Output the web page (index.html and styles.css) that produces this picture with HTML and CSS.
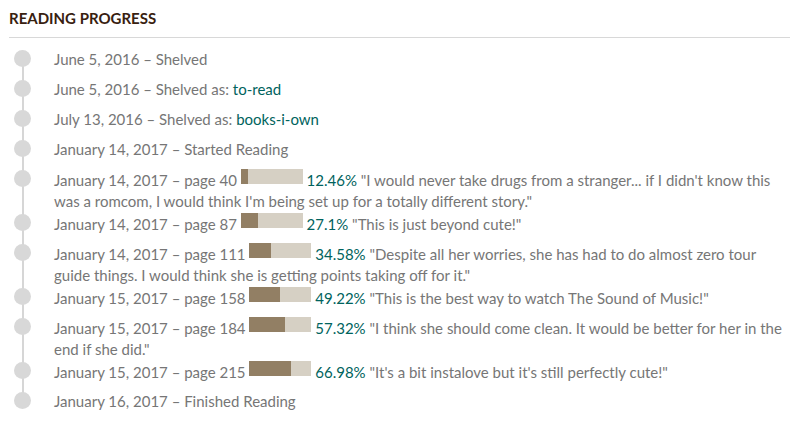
FILE: index.html
```html
<!DOCTYPE html>
<html>
<head>
<meta charset="utf-8">
<link rel="stylesheet" href="styles.css">
</head>
<body>
<section class="progress">
  <h2 class="title">READING PROGRESS</h2>
  <ul class="timeline">
    <li class="item"><span class="dot"></span><div class="text">June 5, 2016 – Shelved</div></li>
    <li class="item"><span class="dot"></span><div class="text">June 5, 2016 – Shelved as: <a class="link" href="#">to-read</a></div></li>
    <li class="item"><span class="dot"></span><div class="text">July 13, 2016 – Shelved as: <a class="link" href="#">books-i-own</a></div></li>
    <li class="item"><span class="dot"></span><div class="text">January 14, 2017 – Started Reading</div></li>
    <li class="item"><span class="dot"></span><div class="text">January 14, 2017 – page 40 <span class="bar"><span class="fill" style="width:12.46%"></span></span> <span class="pct">12.46%</span> "I would never take drugs from a stranger... if I didn't know this was a romcom, I would think I'm being set up for a totally different story."</div></li>
    <li class="item"><span class="dot"></span><div class="text">January 14, 2017 – page 87 <span class="bar"><span class="fill" style="width:27.1%"></span></span> <span class="pct">27.1%</span> "This is just beyond cute!"</div></li>
    <li class="item"><span class="dot"></span><div class="text">January 14, 2017 – page 111 <span class="bar"><span class="fill" style="width:34.58%"></span></span> <span class="pct">34.58%</span> "Despite all her worries, she has had to do almost zero tour guide things. I would think she is getting points taking off for it."</div></li>
    <li class="item"><span class="dot"></span><div class="text">January 15, 2017 – page 158 <span class="bar"><span class="fill" style="width:49.22%"></span></span> <span class="pct">49.22%</span> "This is the best way to watch The Sound of Music!"</div></li>
    <li class="item"><span class="dot"></span><div class="text">January 15, 2017 – page 184 <span class="bar"><span class="fill" style="width:57.32%"></span></span> <span class="pct">57.32%</span> "I think she should come clean. It would be better for her in the end if she did."</div></li>
    <li class="item"><span class="dot"></span><div class="text">January 15, 2017 – page 215 <span class="bar"><span class="fill" style="width:66.98%"></span></span> <span class="pct">66.98%</span> "It's a bit instalove but it's still perfectly cute!"</div></li>
    <li class="item"><span class="dot"></span><div class="text">January 16, 2017 – Finished Reading</div></li>
  </ul>
</section>
</body>
</html>
```
FILE: styles.css
```css
html, body {
  margin: 0;
  padding: 0;
  background: #ffffff;
}

.progress {
  padding: 0 18px 0 9px;
  font-family: Lato, "Noto Sans", sans-serif;
}

.title {
  margin: 0;
  padding: 8px 0 9px;
  line-height: 20px;
  font-size: 15px;
  font-weight: 700;
  color: #382110;
  border-bottom: 1px solid #d8d8d8;
}

.timeline {
  list-style: none;
  margin: 0;
  padding: 11px 0 0 0;
}

.item {
  position: relative;
  display: flex;
  align-items: flex-start;
  min-height: 30px;
  padding-bottom: 1px;
  box-sizing: border-box;
}

.item::before {
  content: "";
  position: absolute;
  left: 13px;
  top: 9px;
  bottom: -9px;
  width: 2px;
  background: #d6d6d6;
}

.item:last-child::before {
  display: none;
}

.dot {
  position: relative;
  flex: none;
  width: 17px;
  height: 17px;
  margin: 1px 0 0 5px;
  border-radius: 50%;
  background: #d8d8d8;
}

.text {
  margin-left: 23px;
  font-size: 15px;
  line-height: 21px;
  color: #767676;
}

.link {
  color: #00635d;
  text-decoration: none;
}

.pct {
  color: #00635d;
}

.bar {
  display: inline-block;
  width: 62px;
  height: 15px;
  vertical-align: 2px;
  background: #d6d0c4;
}

.fill {
  display: block;
  height: 100%;
  background: #927f64;
}
```
